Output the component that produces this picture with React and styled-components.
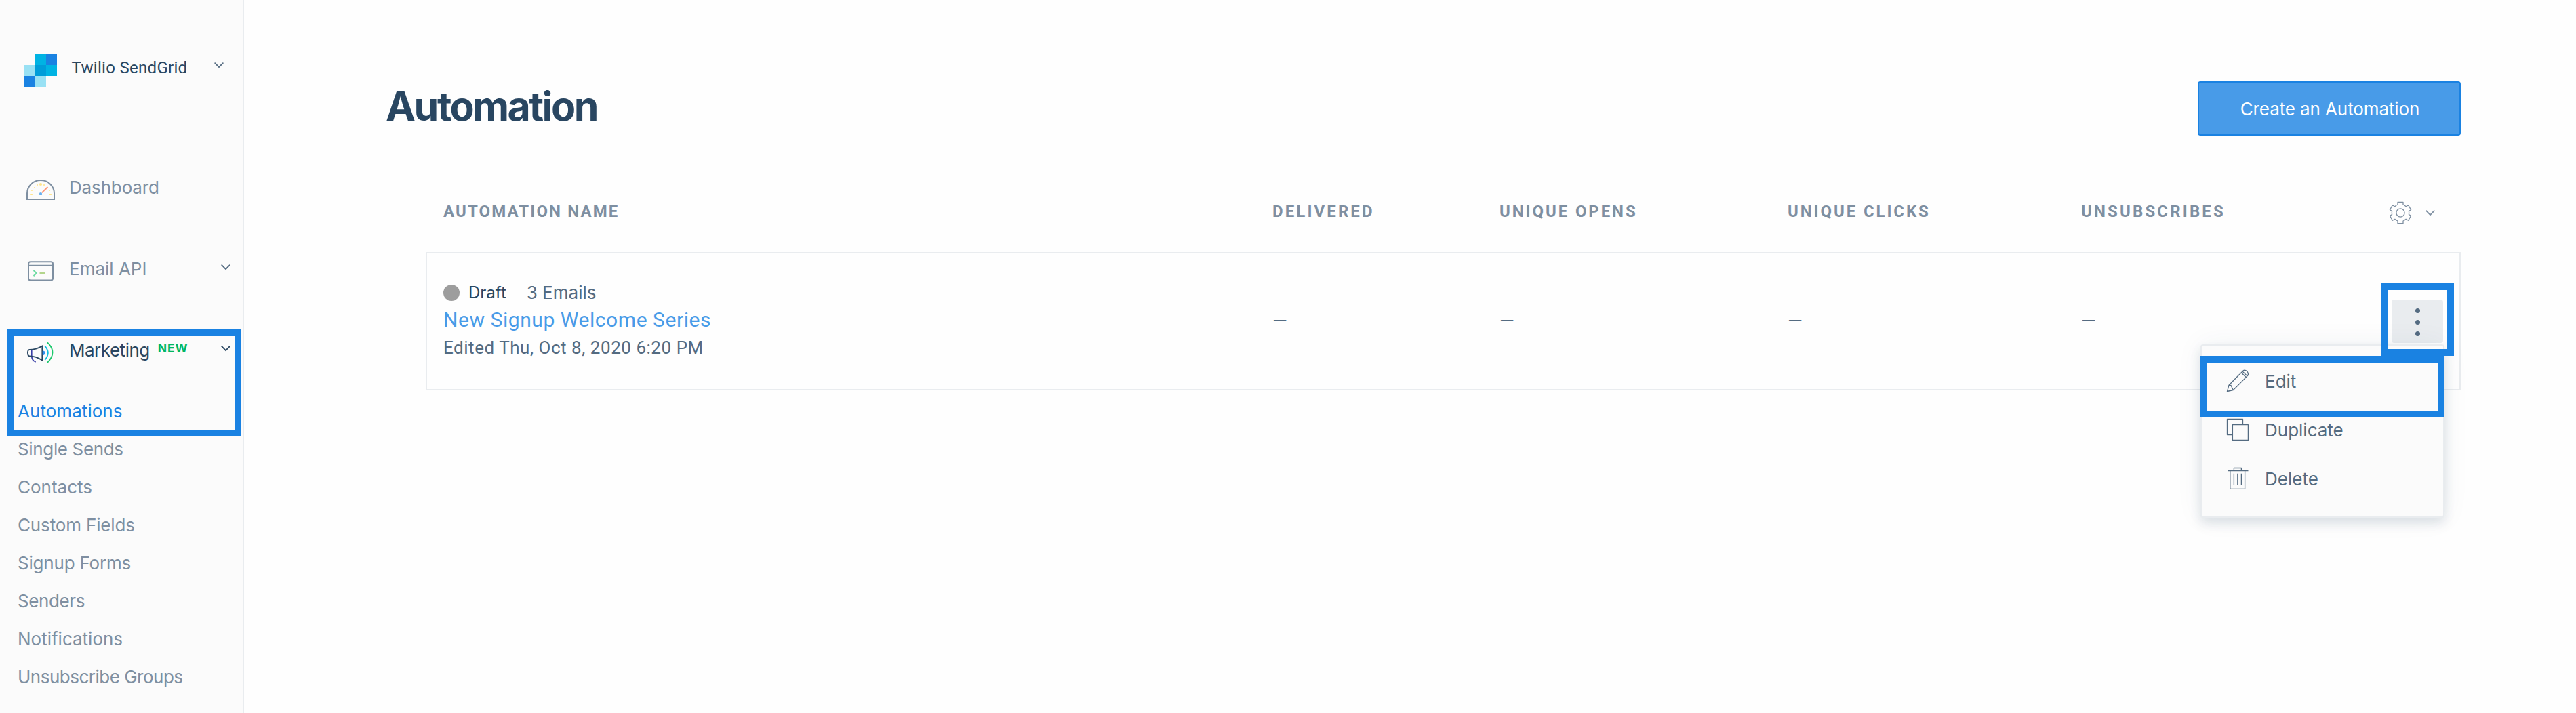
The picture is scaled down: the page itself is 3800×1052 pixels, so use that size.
import React from "react";
import styled, { createGlobalStyle } from "styled-components";

const GlobalStyle = createGlobalStyle`
  *, *::before, *::after { box-sizing: border-box; }
  body { margin: 0; background: #fefefe; font-family: Inter, "Liberation Sans", sans-serif; }
  h1, ul { margin: 0; padding: 0; }
  ul { list-style: none; }
  svg { display: block; flex: none; }
`;

const ink = { navy: "#294661", slate: "#546b81", muted: "#7e8fa1", blue: "#1a82e2", line: "#e9ecef" };

const Page = styled.div`
  display: flex;
  height: 1052px;
  overflow: hidden;
`;

const Sidebar = styled.nav`
  flex: none;
  width: 360px;
  background: #fbfbfb;
  border-right: 2px solid ${ink.line};
`;

const Account = styled.div`
  display: flex;
  align-items: flex-start;
  padding: 80px 28px 0 36px;
  height: 257px;
`;

const AccountName = styled.span`
  margin-left: 21.5px;
  font: 400 24px/40px Roboto, "Liberation Sans", sans-serif;
  letter-spacing: 0.3px;
  color: ${ink.navy};
  white-space: nowrap;
`;

const NavGroup = styled.div`
  position: relative;
`;

const NavItem = styled.div`
  display: flex;
  align-items: flex-start;
  height: 40px;
  padding: 0 18px 0 36px;
  margin-bottom: ${(p) => (p.$open ? 42 : 80)}px;
  color: ${(p) => (p.$open ? ink.navy : ink.muted)};
`;

const NavLabel = styled.span`
  margin-left: 18px;
  font-size: 26px;
  line-height: 40px;
  letter-spacing: ${(p) => p.$track || 0}px;
  white-space: nowrap;
`;

const NewTag = styled.span`
  margin-left: 12px;
  font-size: 17.5px;
  font-weight: 700;
  line-height: 33px;
  letter-spacing: 0.9px;
  color: #00b661;
`;

const ChevronSlot = styled.span`
  margin-left: auto;
  padding-top: ${(p) => p.$top}px;
`;

const SubItem = styled.li`
  padding-left: 26px;
  font-size: 26px;
  line-height: 56px;
  letter-spacing: ${(p) => p.$track || 0}px;
  color: ${(p) => (p.$active ? ink.blue : ink.muted)};
  white-space: nowrap;
`;

const Callout = styled.div`
  position: absolute;
  z-index: 3;
  top: ${(p) => p.$top}px;
  left: ${(p) => p.$left}px;
  width: ${(p) => p.$width}px;
  height: ${(p) => p.$height}px;
  border: 10px solid ${ink.blue};
  pointer-events: none;
`;

const Main = styled.main`
  flex: 1;
  min-width: 0;
  padding: 120px 170px 0 209px;
`;

const PageHeader = styled.header`
  display: flex;
  justify-content: space-between;
  align-items: flex-start;
  height: 80px;
`;

const Title = styled.h1`
  font: 700 59px/73px Inter, "Liberation Sans", sans-serif;
  letter-spacing: -2.45px;
  color: ${ink.navy};
`;

const PrimaryButton = styled.button`
  width: 388px;
  height: 80px;
  padding: 0 0 0 2px;
  border: 2px solid ${ink.blue};
  border-radius: 4px;
  background: #489be8;
  color: #fff;
  font: 400 26px/75px Inter, "Liberation Sans", sans-serif;
  letter-spacing: -0.1px;
`;

const Table = styled.section`
  margin-left: 59px;
`;

const columns = "1223px 335px 425px 433px";

const HeadRow = styled.div`
  display: grid;
  grid-template-columns: ${columns} 454px 1fr;
  align-items: start;
  height: 172px;
  padding: 92px 0 0 26px;
`;

const HeadCell = styled.span`
  font: 700 24px/40px Roboto, "Liberation Sans", sans-serif;
  letter-spacing: ${(p) => p.$track}px;
  color: ${ink.muted};
  white-space: nowrap;
`;

const HeadTools = styled.div`
  display: flex;
  align-items: center;
  gap: 20px;
  padding-top: 5px;
`;

const Card = styled.div`
  display: grid;
  grid-template-columns: ${columns} 1fr;
  align-items: center;
  height: 204px;
  padding-left: 24px;
  border: 2px solid ${ink.line};
  background: #fefefe;
`;

const Summary = styled.div`
  display: flex;
  flex-direction: column;
  padding-bottom: 2px;
`;

const StatusLine = styled.div`
  display: flex;
  align-items: center;
  height: 36px;
  white-space: nowrap;
`;

const StatusDot = styled.span`
  width: 24px;
  height: 24px;
  border-radius: 50%;
  background: #9d9d9d;
`;

const StatusText = styled.span`
  margin-left: 13px;
  font-size: 24px;
  line-height: 34px;
  color: ${ink.navy};
`;

const EmailCount = styled.span`
  margin-left: 30px;
  font-size: 26px;
  line-height: 36px;
  color: ${ink.slate};
`;

const AutomationLink = styled.a`
  font: 400 30px/44px Roboto, "Liberation Sans", sans-serif;
  letter-spacing: 0.56px;
  color: #489be8;
`;

const Edited = styled.span`
  font: 400 26px/38px Roboto, "Liberation Sans", sans-serif;
  letter-spacing: 0.53px;
  color: ${ink.slate};
`;

const Value = styled.span`
  font: 400 28px/38px Roboto, "Liberation Sans", sans-serif;
  color: ${ink.slate};
`;

const LastCell = styled.div`
  display: flex;
  justify-content: space-between;
  align-items: center;
`;

const Actions = styled.div`
  position: relative;
  width: 76px;
  height: 64px;
  margin-right: 24px;
`;

const Kebab = styled.button`
  display: flex;
  flex-direction: column;
  align-items: center;
  justify-content: center;
  gap: 9.7px;
  width: 76px;
  height: 64px;
  padding: 3px 0 0 1px;
  border: 0;
  border-radius: 4px;
  background: ${ink.line};
`;

const KebabDot = styled.span`
  width: 7px;
  height: 7px;
  border-radius: 50%;
  background: ${ink.slate};
`;

const Menu = styled.ul`
  position: absolute;
  z-index: 2;
  top: 66px;
  right: -2px;
  width: 360px;
  height: 256px;
  padding-top: 16px;
  border: 2px solid ${ink.line};
  border-radius: 4px;
  background: #fbfbfb;
  box-shadow: 0 8px 16px rgba(41, 70, 97, 0.14), 0 0 40px rgba(41, 70, 97, 0.06);
`;

const MenuItem = styled.li`
  display: flex;
  align-items: center;
  gap: 22px;
  height: 72px;
  padding-left: 36px;
  font-size: 26px;
  line-height: 72px;
  color: ${ink.slate};
`;

const MenuLabel = styled.span`
  padding: 1px 0 0 1px;
`;

const Chevron = ({ color = ink.slate }) => (
  <svg width="14" height="9" viewBox="0 0 14 9" fill="none" stroke={color} strokeWidth="1.8" strokeLinecap="round" strokeLinejoin="round">
    <path d="M1.2 1.2 7 7.2l5.800-6" />
  </svg>
);

const Logo = () => (
  <svg width="48" height="48" viewBox="0 0 48 48" shapeRendering="crispEdges">
    <path fill="#00b3e3" d="M16 0h16v16H16zM32 16h16v16H32z" />
    <path fill="#1a82e2" d="M32 0h16v16H32zM0 32h16v16H0z" />
    <path fill="#99e1f4" d="M0 16h16v16H0zM16 32h16v16H16z" />
    <path fill="#009dd9" d="M16 16h16v16H16z" />
  </svg>
);

const GaugeIcon = () => (
  <svg width="48" height="40" viewBox="0 0 48 40" fill="none">
    <path d="M4 37V28.500A20 19.500 0 0 1 44 28.500V37Z" stroke="#7e8fa1" strokeWidth="2" />
    <g fill="#ffe58c">
      <circle cx="24" cy="15" r="2.100" />
      <circle cx="19" cy="16" r="1.100" />
      <circle cx="29" cy="16" r="1.100" />
      <circle cx="15" cy="20" r="1.100" />
      <circle cx="11" cy="24" r="1.100" />
      <circle cx="37" cy="24" r="1.100" />
    </g>
    <path d="M9 30h2.200M37 30h2.200" stroke="#ffe58c" strokeWidth="2" strokeLinecap="round" />
    <path d="M25.800 27.400 34.500 19" stroke="#ff9a7b" strokeWidth="2" />
    <circle cx="24" cy="29" r="2.100" fill="#6bb0ee" />
  </svg>
);

const TerminalIcon = () => (
  <svg width="48" height="40" viewBox="0 0 48 40" fill="none" strokeWidth="2">
    <rect x="6" y="9.300" width="36" height="27.200" rx="3" stroke="#7e8fa1" />
    <path d="M6 14.800h36" stroke="#7e8fa1" />
    <path d="M13.500 22 17.800 26l-4.300 4.200" stroke="#6fdca4" />
    <path d="M22.500 26H30" stroke="#b3d58c" />
  </svg>
);

const MegaphoneIcon = () => (
  <svg width="48" height="40" viewBox="0 0 48 40" fill="none" strokeWidth="1.800">
    <path d="M10.700 19v8.500q0 7.500 6 9.500" stroke="#3a3fa8" />
    <path d="M7.500 19C14 19 19.500 17.500 26.300 13.500V34.500C19.500 30 14 28.300 7.500 28.300Q4.900 28.300 4.900 23.600T7.500 19Z" stroke="#294661" />
    <path d="M27.200 20.800a3 3 0 0 1 0 6z" fill="#2f8ff0" stroke="#2f8ff0" strokeWidth=".8" />
    <path d="M30.300 13.600q9 10 0 20.300" stroke="#10bfe0" />
    <path d="M34 8.300q15 14.500 0 29.500" stroke="#1cc86c" />
  </svg>
);

const GearIcon = () => (
  <svg width="34" height="34" viewBox="-17 -17 34 34" fill="none" stroke="#7e8fa1" strokeWidth="1.300" strokeLinejoin="round">
    <path d="M-4 -15.700H4V-12Q6 -11.300 8.200 -9.300L11.600 -11.300L15.600 -4.400L12.400 -2.500Q12.900 0 12.400 2.500L15.600 4.400L11.600 11.300L8.200 9.300Q6 11.300 4 12V15.700H-4V12Q-6 11.300 -8.200 9.300L-11.600 11.300L-15.600 4.400L-12.400 2.500Q-12.900 0 -12.400 -2.500L-15.600 -4.400L-11.600 -11.300L-8.200 -9.300Q-6 -11.300 -4 -12Z" />
    <circle r="6.100" />
  </svg>
);

const MenuIcon = ({ children }) => (
  <svg width="34" height="34" viewBox="0 0 34 34" fill="none" stroke={ink.slate} strokeWidth="1.300" strokeLinejoin="round">
    {children}
  </svg>
);

const PencilIcon = () => (
  <MenuIcon>
    <path d="M1.500 32.500 4 23.200 24.800 2.200Q27.300-.2 30.300 2.600T32 8.900L10.300 30.500Z" />
    <path d="M4 23.200 7 23.500 10.300 30.500M22.200 4.800l7.200 6.900M24 3l7.200 6.900" />
  </MenuIcon>
);

const DuplicateIcon = () => (
  <MenuIcon>
    <path d="M9.400 24.600H1.500V1.500H24.500V9.700" />
    <path d="M9.400 9.700H32.400V32.500H9.400Z" />
  </MenuIcon>
);

const TrashIcon = () => (
  <MenuIcon>
    <path d="M2.300 5.500H32.500M11.400 5.500V1.500H22.400V5.500M5.800 5.500V32.400H27.600V5.500M11.400 9.800V26.800M16.800 9.800V26.800M22.400 9.800V26.800" />
  </MenuIcon>
);

const subItems = [
  { label: "Automations", active: true, track: 0.05 },
  { label: "Single Sends", track: -0.35 },
  { label: "Contacts", track: 0 },
  { label: "Custom Fields", track: -0.15 },
  { label: "Signup Forms", track: -0.2 },
  { label: "Senders", track: -0.4 },
  { label: "Notifications", track: 0 },
  { label: "Unsubscribe Groups", track: -0.5 },
];

const headers = [
  { label: "AUTOMATION NAME", track: 2.1 },
  { label: "DELIVERED", track: 3.1 },
  { label: "UNIQUE OPENS", track: 2.9 },
  { label: "UNIQUE CLICKS", track: 2.9 },
  { label: "UNSUBSCRIBES", track: 3.15 },
];

const menuItems = [
  { label: "Edit", Icon: PencilIcon },
  { label: "Duplicate", Icon: DuplicateIcon },
  { label: "Delete", Icon: TrashIcon },
];

const ActionsMenu = () => (
  <Actions>
    <Kebab aria-label="Actions">
      <KebabDot />
      <KebabDot />
      <KebabDot />
    </Kebab>
    <Menu>
      {menuItems.map(({ label, Icon }) => (
        <MenuItem key={label}>
          <Icon />
          <MenuLabel>{label}</MenuLabel>
        </MenuItem>
      ))}
      <Callout $top={15} $left={-2} $width={360} $height={91} />
    </Menu>
    <Callout $top={-24} $left={-16} $width={108} $height={107} />
  </Actions>
);

export default function App() {
  return (
    <Page>
      <GlobalStyle />
      <Sidebar>
        <Account>
          <Logo />
          <AccountName>Twilio SendGrid</AccountName>
          <ChevronSlot $top={12}><Chevron /></ChevronSlot>
        </Account>
        <NavItem>
          <GaugeIcon />
          <NavLabel $track={-0.15}>Dashboard</NavLabel>
        </NavItem>
        <NavItem>
          <TerminalIcon />
          <NavLabel>Email API</NavLabel>
          <ChevronSlot $top={13}><Chevron /></ChevronSlot>
        </NavItem>
        <NavGroup>
          <NavItem $open>
            <MegaphoneIcon />
            <NavLabel $track={-0.5}>Marketing</NavLabel>
            <NewTag>NEW</NewTag>
            <ChevronSlot $top={13}><Chevron color={ink.navy} /></ChevronSlot>
          </NavItem>
          <ul>
            {subItems.map((s) => (
              <SubItem key={s.label} $active={s.active} $track={s.track}>{s.label}</SubItem>
            ))}
          </ul>
          <Callout $top={-11} $left={10} $width={346} $height={158} />
        </NavGroup>
      </Sidebar>
      <Main>
        <PageHeader>
          <Title>Automation</Title>
          <PrimaryButton>Create an Automation</PrimaryButton>
        </PageHeader>
        <Table>
          <HeadRow>
            {headers.map((h) => (
              <HeadCell key={h.label} $track={h.track}>{h.label}</HeadCell>
            ))}
            <HeadTools>
              <GearIcon />
              <Chevron color={ink.muted} />
            </HeadTools>
          </HeadRow>
          <Card>
            <Summary>
              <StatusLine>
                <StatusDot />
                <StatusText>Draft</StatusText>
                <EmailCount>3 Emails</EmailCount>
              </StatusLine>
              <AutomationLink>New Signup Welcome Series</AutomationLink>
              <Edited>Edited Thu, Oct 8, 2020 6:20 PM</Edited>
            </Summary>
            <Value>—</Value>
            <Value>—</Value>
            <Value>—</Value>
            <LastCell>
              <Value>—</Value>
              <ActionsMenu />
            </LastCell>
          </Card>
        </Table>
      </Main>
    </Page>
  );
}
